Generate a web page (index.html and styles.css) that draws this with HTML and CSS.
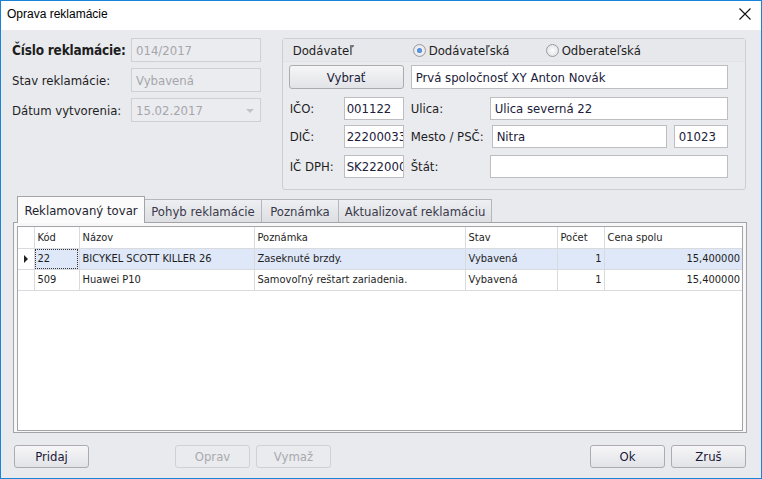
FILE: index.html
```html
<!DOCTYPE html>
<html lang="sk">
<head>
    <meta charset="UTF-8">
    <title>Oprava reklamácie</title>
    <link rel="stylesheet" href="styles.css">
</head>
<body>
    <div class="window">
        <div class="titlebar">
            <span class="title">Oprava reklamácie</span>
            <svg class="close" width="12" height="12" viewBox="0 0 12 12">
                <path d="M0.5 0.5 L11.5 11.5 M11.5 0.5 L0.5 11.5" stroke="#111" stroke-width="1.1" fill="none"/>
            </svg>
        </div>

        <div class="content">
            <div class="top">
                <div class="left-form">
                    <label class="bold">Číslo reklamácie:</label>
                    <div class="input disabled">014/2017</div>
                    <label>Stav reklamácie:</label>
                    <div class="input disabled">Vybavená</div>
                    <label>Dátum vytvorenia:</label>
                    <div class="input disabled combo">15.02.2017<span class="arrow"></span></div>
                </div>

                <div class="group">
                    <div class="group-head">
                        <span class="group-title">Dodávateľ</span>
                        <span class="radio-item first"><span class="radio checked"></span>Dodávateľská</span>
                        <span class="radio-item"><span class="radio"></span>Odberateľská</span>
                    </div>
                    <div class="row row-select">
                        <button class="btn btn-select">Vybrať</button>
                        <div class="input w-company">Prvá spoločnosť XY Anton Novák</div>
                    </div>
                    <div class="row row-first">
                        <label class="lbl-a">IČO:</label>
                        <div class="input w-small">001122</div>
                        <label class="lbl-b">Ulica:</label>
                        <div class="input w-wide">Ulica severná 22</div>
                    </div>
                    <div class="row">
                        <label class="lbl-a">DIČ:</label>
                        <div class="input w-small">22200033</div>
                        <label class="lbl-b lbl-city">Mesto / PSČ:</label>
                        <div class="input w-city">Nitra</div>
                        <div class="input w-zip">01023</div>
                    </div>
                    <div class="row row-last">
                        <label class="lbl-a">IČ DPH:</label>
                        <div class="input w-small">SK222000</div>
                        <label class="lbl-b">Štát:</label>
                        <div class="input w-wide"></div>
                    </div>
                </div>
            </div>

            <div class="tabs">
                <div class="tab active" style="width: 128px">Reklamovaný tovar</div>
                <div class="tab" style="width: 117px">Pohyb reklamácie</div>
                <div class="tab" style="width: 77px">Poznámka</div>
                <div class="tab" style="width: 153px">Aktualizovať reklamáciu</div>
            </div>
            <div class="panel">
                <div class="grid">
                    <table>
                        <colgroup>
                            <col style="width: 16px">
                            <col style="width: 45px">
                            <col style="width: 175px">
                            <col style="width: 211px">
                            <col style="width: 92px">
                            <col style="width: 47px">
                            <col>
                        </colgroup>
                        <thead>
                            <tr>
                                <th></th>
                                <th>Kód</th>
                                <th>Názov</th>
                                <th>Poznámka</th>
                                <th>Stav</th>
                                <th>Počet</th>
                                <th>Cena spolu</th>
                            </tr>
                        </thead>
                        <tbody>
                            <tr class="selected">
                                <td class="indicator"><span class="tri"></span></td>
                                <td><span class="focus">22</span></td>
                                <td>BICYKEL SCOTT KILLER 26</td>
                                <td>Zaseknuté brzdy.</td>
                                <td>Vybavená</td>
                                <td class="num">1</td>
                                <td class="num">15,400000</td>
                            </tr>
                            <tr>
                                <td class="indicator"></td>
                                <td>509</td>
                                <td>Huawei P10</td>
                                <td>Samovoľný reštart zariadenia.</td>
                                <td>Vybavená</td>
                                <td class="num">1</td>
                                <td class="num">15,400000</td>
                            </tr>
                        </tbody>
                    </table>
                </div>
            </div>

            <div class="footer">
                <button class="btn btn-add">Pridaj</button>
                <button class="btn btn-edit" disabled>Oprav</button>
                <button class="btn" disabled>Vymaž</button>
                <button class="btn btn-ok">Ok</button>
                <button class="btn">Zruš</button>
            </div>
        </div>
    </div>
</body>
</html>
```

FILE: styles.css
```css
* {
    margin: 0;
    padding: 0;
    box-sizing: border-box;
}

body {
    font-family: 'DejaVu Sans Condensed', 'Liberation Sans', sans-serif;
    font-size: 13px;
    color: #1e1e1e;
    background: #fff;
}

.window {
    width: 762px;
    height: 479px;
    border: 1px solid #1883d7;
    background: #e9eaee;
    display: flex;
    flex-direction: column;
}

.titlebar {
    height: 29px;
    background: #fff;
    display: flex;
    align-items: center;
    justify-content: space-between;
    padding: 0 10px 4px 6px;
}

.title {
    font-family: 'Liberation Sans', sans-serif;
    font-size: 12px;
    color: #000;
}

.content {
    padding: 8px 15px 0 11px;
}

.top {
    display: flex;
}

/* left form */
.left-form {
    width: 270px;
    display: grid;
    grid-template-columns: 119px 130px;
    grid-auto-rows: 24px;
    row-gap: 6px;
    align-items: center;
    align-content: start;
}

.left-form label {
    white-space: nowrap;
}

.left-form .bold {
    font-weight: bold;
    font-size: 13.5px;
    letter-spacing: -0.2px;
}

.input {
    height: 24px;
    background: #fff;
    border: 1px solid #bdbdc2;
    padding: 0 4px;
    display: flex;
    align-items: center;
    color: #20203a;
    white-space: nowrap;
    overflow: hidden;
}

.input.disabled {
    background: #ebecf0;
    border-color: #cfd0d4;
    color: #a6a6aa;
}

.combo {
    position: relative;
}

.arrow {
    position: absolute;
    right: 6px;
    top: 10px;
    border-left: 4px solid transparent;
    border-right: 4px solid transparent;
    border-top: 4px solid #c3c3c7;
}

/* supplier group */
.group {
    width: 465px;
    height: 152px;
    border: 1px solid #cdced3;
    border-radius: 3px;
    background: #eaebef;
}

.group-head {
    height: 23px;
    display: flex;
    align-items: center;
    padding-left: 10px;
    border-bottom: 1px solid #e2e3e7;
    background: #e7e8ec;
}

.group-title {
    width: 120px;
}

.radio-item {
    display: flex;
    align-items: center;
    gap: 3px;
}

.radio-item.first {
    width: 133px;
}

.radio {
    width: 13px;
    height: 13px;
    border-radius: 50%;
    border: 1px solid #9a9aa0;
    background: radial-gradient(circle, #fdfdfd 0%, #dcdde2 100%);
    position: relative;
}

.radio.checked::after {
    content: "";
    position: absolute;
    left: 3px;
    top: 3px;
    width: 5px;
    height: 5px;
    border-radius: 50%;
    background: radial-gradient(circle, #6fa6e8 0%, #2c6cc4 100%);
}

.row {
    display: flex;
    align-items: center;
    height: 23px;
    margin-top: 5px;
    padding-left: 7px;
}

.row .input {
    height: 23px;
}

.row-first {
    margin-top: 8px;
}

.row-last {
    margin-top: 7px;
}

.row-select {
    margin-top: 3px;
    padding-left: 6px;
    height: 24px;
}

.row-select .input {
    height: 24px;
}

.lbl-a {
    width: 54px;
}

.lbl-b {
    width: 79px;
    margin-left: 7px;
}

.lbl-city {
    width: 81px;
}

.w-small { width: 60px; padding: 0 2px; }
.w-company { width: 317px; margin-left: 7px; }
.w-wide { width: 238px; }
.w-city { width: 175px; }
.w-zip { width: 54px; margin-left: 7px; }

/* buttons */
.btn {
    font-family: inherit;
    font-size: 13px;
    color: #1a1a3a;
    height: 23px;
    width: 75px;
    border: 1px solid #ababb0;
    border-radius: 3px;
    background: linear-gradient(#f6f6f8, #e2e3e7);
}

.btn:disabled {
    color: #a9a9ad;
    border-color: #d0d1d5;
    background: #eaebee;
}

.btn-select {
    width: 115px;
    height: 24px;
}

/* tabs */
.tabs {
    display: flex;
    align-items: flex-end;
    height: 26px;
    margin: 6px 0 0 5px;
    position: relative;
    z-index: 1;
}

.tab {
    height: 23px;
    border: 1px solid #b6b7bc;
    border-bottom: none;
    border-left: none;
    background: linear-gradient(#eeeff2, #dddee2);
    display: flex;
    align-items: center;
    justify-content: center;
    color: #3a3a4a;
}

.tab.active {
    border-left: 1px solid #a3a3a8;
    border-color: #a3a3a8;
    background: #fbfbfc;
    color: #1e1e2e;
    margin-bottom: -1px;
    height: 27px;
}

.panel {
    width: 734px;
    height: 211px;
    margin-left: 1px;
    border: 1px solid #a3a3a8;
    background: #f7f7f8;
    padding: 3px;
}

.grid {
    height: 205px;
    border: 1px solid #a3a3a8;
    background: #fff;
}

table {
    width: 100%;
    table-layout: fixed;
    border-collapse: collapse;
    font-size: 11px;
    color: #1e1e1e;
}

th, td {
    height: 21px;
    padding: 0 2px 0 3px;
    text-align: left;
    font-weight: normal;
    border-right: 1px solid #d9dadd;
    border-bottom: 1px solid #d9dadd;
    white-space: nowrap;
    overflow: hidden;
}

th {
    height: 21px;
}

th:last-child, td:last-child {
    border-right: none;
}

.num {
    text-align: right;
}

.selected td {
    background: #dee8f8;
}

.selected td.indicator {
    background: #fff;
}

.indicator {
    position: relative;
}

.tri {
    position: absolute;
    left: 6px;
    top: 6px;
    border-top: 4px solid transparent;
    border-bottom: 4px solid transparent;
    border-left: 4px solid #222;
}

.focus {
    display: block;
    margin-left: -2px;
    padding-left: 2px;
    outline: 1px dotted #333;
    outline-offset: 0;
    line-height: 18px;
}

/* footer */
.footer {
    display: flex;
    gap: 6px;
    margin-top: 12px;
    padding-left: 2px;
}

.btn-edit {
    margin-left: 80px;
}

.btn-ok {
    margin-left: auto;
}
```
